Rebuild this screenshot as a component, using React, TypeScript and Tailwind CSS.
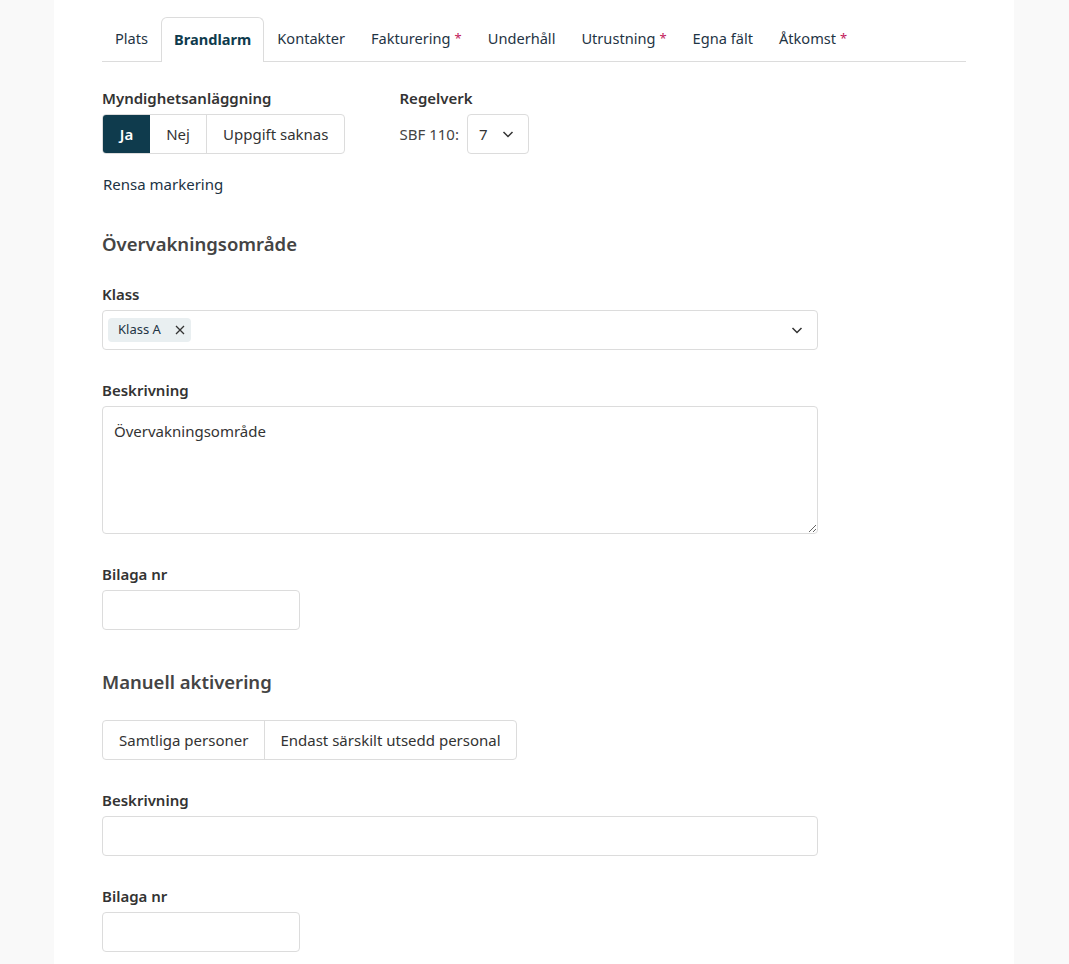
const tabs = [
  { name: "Plats" },
  { name: "Brandlarm", active: true },
  { name: "Kontakter" },
  { name: "Fakturering", req: true },
  { name: "Underhåll" },
  { name: "Utrustning", req: true },
  { name: "Egna fält" },
  { name: "Åtkomst", req: true },
]

function Chevron() {
  return (
    <svg width="12" height="12" viewBox="0 0 12 12" fill="none" stroke="#333" strokeWidth="1.5">
      <path d="M1.5 4 6 8.5 10.5 4" />
    </svg>
  )
}

function Label({ children }: { children: React.ReactNode }) {
  return <div className="mb-[6px] text-[15px] font-semibold leading-5 text-[#333]">{children}</div>
}

export default function App() {
  return (
    <div className="min-h-[964px] bg-[#f9f9f9] font-['Noto_Sans',sans-serif] text-[15px] text-[#333]">
      <div className="mx-[54px] min-h-[964px] w-[960px] bg-white px-12 pb-10">
        {/* tabs */}
        <div className="flex border-b border-[#dcdcdc] pt-[17px] text-[14.6px]">
          {tabs.map((t) => (
            <div
              key={t.name}
              className={
                t.active
                  ? "-mb-px flex h-[45px] items-center rounded-t-[6px] border border-b-0 border-[#dcdcdc] bg-white px-[12px] font-bold text-[#0f3b4d]"
                  : "flex h-[44px] items-center px-[13px] text-[#1f3444]"
              }
            >
              {t.name}
              {t.req && <span className="ml-[4px] text-[13px] text-[#c2185b]">*</span>}
            </div>
          ))}
        </div>

        <div className="mt-[26px] flex gap-[54px]">
          <div>
            <Label>Myndighetsanläggning</Label>
            <div className="flex h-10 overflow-hidden rounded-[4px] border border-[#dcdcdc]">
              <div className="flex w-[47px] items-center justify-center bg-[#0f3b4d] font-semibold text-white">Ja</div>
              <div className="flex w-[57px] items-center justify-center border-r border-[#dcdcdc]">Nej</div>
              <div className="flex items-center px-4">Uppgift saknas</div>
            </div>
          </div>
          <div>
            <Label>Regelverk</Label>
            <div className="flex items-center gap-2">
              <span className="text-[#444]">SBF 110:</span>
              <div className="flex h-10 w-[62px] items-center justify-between rounded-[4px] border border-[#dcdcdc] pl-[11px] pr-[14px]">
                <span>7</span>
                <Chevron />
              </div>
            </div>
          </div>
        </div>

        <div className="ml-px mt-5 leading-5 text-[#1c3344]">Rensa markering</div>

        <h2 className="mt-[36px] text-[18.5px] font-semibold leading-7 text-[#444]">Övervakningsområde</h2>

        <div className="mt-[26px] w-[716px]">
          <Label>Klass</Label>
          <div className="flex h-10 items-center justify-between rounded-[4px] border border-[#dcdcdc] pl-[5px] pr-[14px]">
            <div className="flex h-[24px] items-center gap-[14px] rounded-[4px] bg-[#e9eff1] pl-[10px] pr-[6px] text-[13px] text-[#1f3444]">
              Klass A
              <svg width="10" height="10" viewBox="0 0 10 10" stroke="#333" strokeWidth="1.3">
                <path d="M1 1l8 8M9 1 1 9" />
              </svg>
            </div>
            <Chevron />
          </div>
        </div>

        <div className="mt-[30px] w-[716px]">
          <Label>Beskrivning</Label>
          <textarea
            defaultValue="Övervakningsområde"
            className="block h-[128px] w-full rounded-[4px] border border-[#dcdcdc] px-[11px] py-[14px] text-[15px] leading-5 text-[#333] outline-none"
          />
        </div>

        <div className="mt-[30px]">
          <Label>Bilaga nr</Label>
          <div className="h-10 w-[198px] rounded-[4px] border border-[#dcdcdc]" />
        </div>

        <h2 className="mt-[38px] text-[18.5px] font-semibold leading-7 text-[#444]">Manuell aktivering</h2>

        <div className="mt-6 flex h-10 w-fit rounded-[4px] border border-[#dcdcdc]">
          <div className="flex items-center border-r border-[#dcdcdc] px-4">Samtliga personer</div>
          <div className="flex items-center px-[15px]">Endast särskilt utsedd personal</div>
        </div>

        <div className="mt-[30px] w-[716px]">
          <Label>Beskrivning</Label>
          <div className="h-10 rounded-[4px] border border-[#dcdcdc]" />
        </div>

        <div className="mt-[30px]">
          <Label>Bilaga nr</Label>
          <div className="h-10 w-[198px] rounded-[4px] border border-[#dcdcdc]" />
        </div>
      </div>
    </div>
  )
}
